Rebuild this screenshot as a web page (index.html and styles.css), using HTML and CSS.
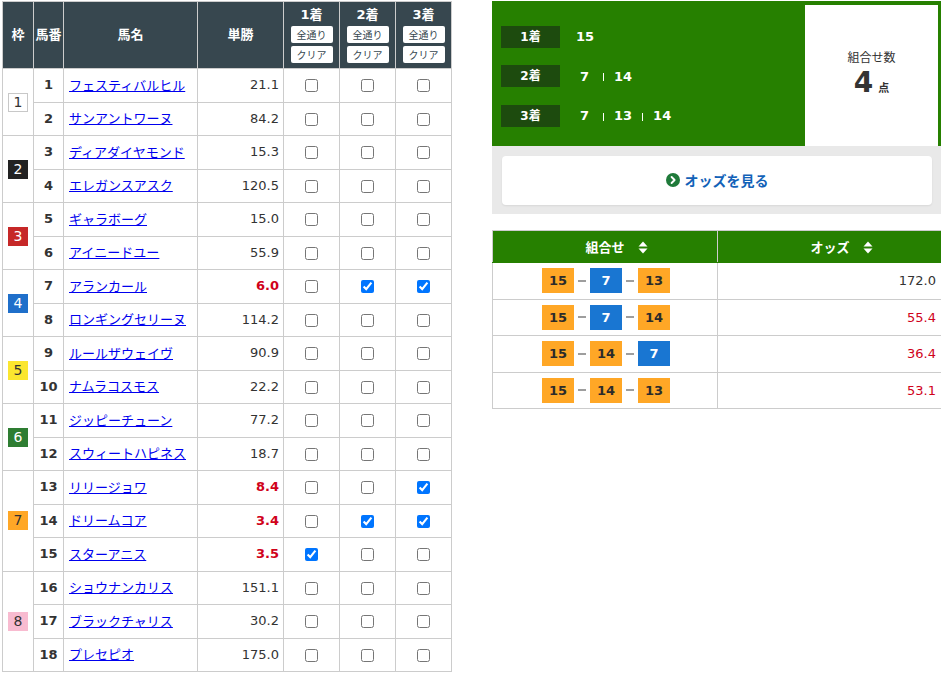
FILE: index.html
```html
<!DOCTYPE html>
<html lang="ja">
<head>
<meta charset="utf-8">
<title>3連単 フォーメーション</title>
<link rel="stylesheet" href="styles.css">
</head>
<body>
<div class="page">
  <table class="horses">
    <colgroup>
      <col class="c-waku"><col class="c-ban"><col class="c-name"><col class="c-odds"><col class="c-chk"><col class="c-chk"><col class="c-chk">
    </colgroup>
    <thead>
      <tr>
        <th>枠</th>
        <th>馬番</th>
        <th>馬名</th>
        <th>単勝</th>
        <th class="pos"><div class="pos-title">1着</div><button class="mini">全通り</button><button class="mini">クリア</button></th>
        <th class="pos"><div class="pos-title">2着</div><button class="mini">全通り</button><button class="mini">クリア</button></th>
        <th class="pos"><div class="pos-title">3着</div><button class="mini">全通り</button><button class="mini">クリア</button></th>
      </tr>
    </thead>
    <tbody>
      <tr><td class="waku" rowspan="2"><span class="wk wk1">1</span></td><td class="ban">1</td><td class="name"><a href="#">フェスティバルヒル</a></td><td class="odds">21.1</td><td class="chk"><input type="checkbox"></td><td class="chk"><input type="checkbox"></td><td class="chk"><input type="checkbox"></td></tr>
      <tr><td class="ban">2</td><td class="name"><a href="#">サンアントワーヌ</a></td><td class="odds">84.2</td><td class="chk"><input type="checkbox"></td><td class="chk"><input type="checkbox"></td><td class="chk"><input type="checkbox"></td></tr>
      <tr><td class="waku" rowspan="2"><span class="wk wk2">2</span></td><td class="ban">3</td><td class="name"><a href="#">ディアダイヤモンド</a></td><td class="odds">15.3</td><td class="chk"><input type="checkbox"></td><td class="chk"><input type="checkbox"></td><td class="chk"><input type="checkbox"></td></tr>
      <tr><td class="ban">4</td><td class="name"><a href="#">エレガンスアスク</a></td><td class="odds">120.5</td><td class="chk"><input type="checkbox"></td><td class="chk"><input type="checkbox"></td><td class="chk"><input type="checkbox"></td></tr>
      <tr><td class="waku" rowspan="2"><span class="wk wk3">3</span></td><td class="ban">5</td><td class="name"><a href="#">ギャラボーグ</a></td><td class="odds">15.0</td><td class="chk"><input type="checkbox"></td><td class="chk"><input type="checkbox"></td><td class="chk"><input type="checkbox"></td></tr>
      <tr><td class="ban">6</td><td class="name"><a href="#">アイニードユー</a></td><td class="odds">55.9</td><td class="chk"><input type="checkbox"></td><td class="chk"><input type="checkbox"></td><td class="chk"><input type="checkbox"></td></tr>
      <tr><td class="waku" rowspan="2"><span class="wk wk4">4</span></td><td class="ban">7</td><td class="name"><a href="#">アランカール</a></td><td class="odds hot">6.0</td><td class="chk"><input type="checkbox"></td><td class="chk"><input type="checkbox" checked></td><td class="chk"><input type="checkbox" checked></td></tr>
      <tr><td class="ban">8</td><td class="name"><a href="#">ロンギングセリーヌ</a></td><td class="odds">114.2</td><td class="chk"><input type="checkbox"></td><td class="chk"><input type="checkbox"></td><td class="chk"><input type="checkbox"></td></tr>
      <tr><td class="waku" rowspan="2"><span class="wk wk5">5</span></td><td class="ban">9</td><td class="name"><a href="#">ルールザウェイヴ</a></td><td class="odds">90.9</td><td class="chk"><input type="checkbox"></td><td class="chk"><input type="checkbox"></td><td class="chk"><input type="checkbox"></td></tr>
      <tr><td class="ban">10</td><td class="name"><a href="#">ナムラコスモス</a></td><td class="odds">22.2</td><td class="chk"><input type="checkbox"></td><td class="chk"><input type="checkbox"></td><td class="chk"><input type="checkbox"></td></tr>
      <tr><td class="waku" rowspan="2"><span class="wk wk6">6</span></td><td class="ban">11</td><td class="name"><a href="#">ジッピーチューン</a></td><td class="odds">77.2</td><td class="chk"><input type="checkbox"></td><td class="chk"><input type="checkbox"></td><td class="chk"><input type="checkbox"></td></tr>
      <tr><td class="ban">12</td><td class="name"><a href="#">スウィートハピネス</a></td><td class="odds">18.7</td><td class="chk"><input type="checkbox"></td><td class="chk"><input type="checkbox"></td><td class="chk"><input type="checkbox"></td></tr>
      <tr><td class="waku" rowspan="3"><span class="wk wk7">7</span></td><td class="ban">13</td><td class="name"><a href="#">リリージョワ</a></td><td class="odds hot">8.4</td><td class="chk"><input type="checkbox"></td><td class="chk"><input type="checkbox"></td><td class="chk"><input type="checkbox" checked></td></tr>
      <tr><td class="ban">14</td><td class="name"><a href="#">ドリームコア</a></td><td class="odds hot">3.4</td><td class="chk"><input type="checkbox"></td><td class="chk"><input type="checkbox" checked></td><td class="chk"><input type="checkbox" checked></td></tr>
      <tr><td class="ban">15</td><td class="name"><a href="#">スターアニス</a></td><td class="odds hot">3.5</td><td class="chk"><input type="checkbox" checked></td><td class="chk"><input type="checkbox"></td><td class="chk"><input type="checkbox"></td></tr>
      <tr><td class="waku" rowspan="3"><span class="wk wk8">8</span></td><td class="ban">16</td><td class="name"><a href="#">ショウナンカリス</a></td><td class="odds">151.1</td><td class="chk"><input type="checkbox"></td><td class="chk"><input type="checkbox"></td><td class="chk"><input type="checkbox"></td></tr>
      <tr><td class="ban">17</td><td class="name"><a href="#">ブラックチャリス</a></td><td class="odds">30.2</td><td class="chk"><input type="checkbox"></td><td class="chk"><input type="checkbox"></td><td class="chk"><input type="checkbox"></td></tr>
      <tr><td class="ban">18</td><td class="name"><a href="#">プレセピオ</a></td><td class="odds">175.0</td><td class="chk"><input type="checkbox"></td><td class="chk"><input type="checkbox"></td><td class="chk"><input type="checkbox"></td></tr>
    </tbody>
  </table>

  <div class="side">
    <div class="summary">
      <div class="picks">
        <div class="pick"><span class="pick-label">1着</span><span class="num">15</span></div>
        <div class="pick"><span class="pick-label">2着</span><span class="num">7</span><span class="sep"></span><span class="num">14</span></div>
        <div class="pick"><span class="pick-label">3着</span><span class="num">7</span><span class="sep"></span><span class="num">13</span><span class="sep"></span><span class="num">14</span></div>
      </div>
      <div class="count">
        <div class="count-label">組合せ数</div>
        <div class="count-value"><span class="big">4</span><span class="unit">点</span></div>
      </div>
    </div>
    <div class="btn-area">
      <a class="odds-btn" href="#">
        <svg class="go" width="14" height="14" viewBox="0 0 14 14"><circle cx="7" cy="7" r="7" fill="#1f7a3a"/><path d="M5.6 4 L8.6 7 L5.6 10" fill="none" stroke="#fff" stroke-width="1.9" stroke-linecap="round" stroke-linejoin="round"/></svg>
        <span>オッズを見る</span>
      </a>
    </div>
    <table class="combos">
      <thead>
        <tr>
          <th><span class="th-in">組合せ<svg class="sort" width="10" height="13" viewBox="0 0 10 13"><path d="M5 0.5 L9.5 5.5 H0.5 Z" fill="#fff"/><path d="M5 12.5 L9.5 7.5 H0.5 Z" fill="#fff"/></svg></span></th>
          <th><span class="th-in">オッズ<svg class="sort" width="10" height="13" viewBox="0 0 10 13"><path d="M5 0.5 L9.5 5.5 H0.5 Z" fill="#fff"/><path d="M5 12.5 L9.5 7.5 H0.5 Z" fill="#fff"/></svg></span></th>
        </tr>
      </thead>
      <tbody>
        <tr><td class="combo"><span class="bd or">15</span><span class="dash"></span><span class="bd bl">7</span><span class="dash"></span><span class="bd or">13</span></td><td class="cod">172.0</td></tr>
        <tr><td class="combo"><span class="bd or">15</span><span class="dash"></span><span class="bd bl">7</span><span class="dash"></span><span class="bd or">14</span></td><td class="cod red">55.4</td></tr>
        <tr><td class="combo"><span class="bd or">15</span><span class="dash"></span><span class="bd or">14</span><span class="dash"></span><span class="bd bl">7</span></td><td class="cod red">36.4</td></tr>
        <tr><td class="combo"><span class="bd or">15</span><span class="dash"></span><span class="bd or">14</span><span class="dash"></span><span class="bd or">13</span></td><td class="cod red">53.1</td></tr>
      </tbody>
    </table>
  </div>
</div>
</body>
</html>
```

FILE: styles.css
```css
* { box-sizing: border-box; }
html, body { margin: 0; padding: 0; background: #fff; }
body {
  font-family: "DejaVu Sans", "Noto Sans CJK JP", sans-serif;
  font-size: 13px;
  color: #333;
  overflow: hidden;
}
.page {
  display: flex;
  align-items: flex-start;
  gap: 40px;
  padding: 1px 0 0 2px;
  width: 941px;
}

/* ---------- horse table ---------- */
.horses {
  border-collapse: collapse;
  table-layout: fixed;
  width: 450px;
  flex: none;
}
.c-waku { width: 31px; }
.c-ban { width: 30px; }
.c-name { width: 134px; }
.c-odds { width: 86px; }
.c-chk { width: 56px; }

.horses th, .horses td {
  border: 1px solid #cccccc;
  padding: 0;
}
.horses th {
  background: #37474f;
  color: #fff;
  font-weight: bold;
  font-size: 13px;
  height: 67px;
  line-height: 16px;
  vertical-align: middle;
  text-align: center;
}
.horses th.pos {
  vertical-align: top;
  padding-top: 5px;
}
.pos-title { height: 19px; line-height: 16px; }
.mini {
  display: block;
  width: 42px;
  height: 17px;
  margin: 0 auto 3px;
  padding: 0;
  border: 0;
  border-radius: 2px;
  background: #fff;
  color: #37474f;
  font-family: "Noto Sans CJK JP", sans-serif;
  font-size: 10px;
  line-height: 17px;
}
.horses td { height: 33.5px; line-height: 16px; vertical-align: middle; }
.waku { text-align: center; }
.wk {
  display: inline-block;
  width: 20px;
  height: 19px;
  line-height: 19px;
  font-size: 14px;
  text-align: center;
  vertical-align: middle;
}
.wk1 { background: #fff; border: 1px solid #c8c8c8; line-height: 17px; color: #333; }
.wk2 { background: #222; color: #fff; }
.wk3 { background: #c62828; color: #fff; }
.wk4 { background: #1f6fca; color: #fff; }
.wk5 { background: #fbe62f; color: #333; }
.wk6 { background: #2e7d32; color: #fff; }
.wk7 { background: #ffa726; color: #333; }
.wk8 { background: #f8bbd0; color: #333; }

.ban { text-align: center; font-weight: bold; color: #333; }
.name { padding-left: 5px !important; white-space: nowrap; overflow: hidden; }
.name a { color: #0000ee; text-decoration: underline; font-family: "Noto Sans CJK JP", sans-serif; font-size: 13px; }
.odds { text-align: right; padding-right: 4px !important; color: #333; }
.odds.hot { color: #d0021b; font-weight: bold; }
.chk { text-align: center; }
.chk input { margin: 0; width: 13px; height: 13px; vertical-align: middle; }

/* ---------- side ---------- */
.side {
  width: 449px;
  flex: none;
  display: flex;
  flex-direction: column;
}
.summary {
  display: flex;
  background: #268000;
  height: 145px;
  padding: 4px 3px 0 0;
}
.picks {
  flex: 1;
  display: flex;
  flex-direction: column;
  justify-content: center;
  gap: 17.5px;
  padding: 1px 0 0 9px;
}
.pick {
  display: flex;
  align-items: center;
  height: 22px;
  color: #fff;
  font-weight: bold;
}
.pick-label {
  width: 59px;
  height: 22px;
  line-height: 22px;
  background: #1d4b0e;
  text-align: center;
  font-size: 12px;
  margin-right: 16px;
  font-family: "DejaVu Sans", "Noto Sans CJK JP", sans-serif;
}
.num { min-width: 17px; text-align: center; font-size: 13px; }
.sep { width: 1px; height: 8px; background: #fff; margin: 2px 10px 0 10px; }
.count {
  width: 133px;
  background: #fff;
  display: flex;
  flex-direction: column;
  align-items: center;
  justify-content: center;
  padding-bottom: 4px;
}
.count-label { font-family: "Noto Sans CJK JP", sans-serif; font-size: 12px; color: #333; line-height: 16px; }
.count-value { display: flex; align-items: baseline; margin-top: 2px; }
.big { font-size: 28px; font-weight: bold; color: #333; line-height: 32px; }
.unit { font-family: "Noto Sans CJK JP", sans-serif; font-size: 11px; font-weight: bold; margin-left: 5px; color: #333; }

.btn-area {
  background: #e9e9e9;
  padding: 10px 9px 9px 10px;
  height: 68px;
}
.odds-btn {
  display: flex;
  align-items: center;
  justify-content: center;
  gap: 5px;
  height: 49px;
  background: #fff;
  border-radius: 4px;
  box-shadow: 0 1px 2px rgba(0,0,0,0.08);
  text-decoration: none;
  color: #1262b8;
  font-family: "Noto Sans CJK JP", sans-serif;
  font-weight: bold;
  font-size: 14px;
  padding: 0 0 2px 0;
}
.go { flex: none; }

.combos {
  margin-top: 16px;
  border-collapse: collapse;
  table-layout: fixed;
  width: 451px;
}
.combos th, .combos td { border: 1px solid #cccccc; padding: 0; }
.combos th {
  background: #268000;
  color: #fff;
  height: 32px;
  font-family: "Noto Sans CJK JP", sans-serif;
  font-size: 13px;
  font-weight: bold;
  width: 50%;
  border-bottom-color: #268000;
}
.combos th:first-child { width: 224px; }
.th-in { position: relative; display: inline-block; }
.sort { position: absolute; left: calc(100% + 13px); top: 50%; margin-top: -6px; }
.combos td { height: 36.5px; vertical-align: middle; }
.combo { text-align: center; font-size: 0; padding-left: 2px !important; }
.bd {
  display: inline-block;
  width: 32px;
  height: 25px;
  line-height: 25px;
  font-size: 13px;
  font-weight: bold;
  text-align: center;
  vertical-align: middle;
}
.bd.or { background: #ffa726; color: #2b2b2b; }
.bd.bl { background: #1976d2; color: #fff; }
.dash { display: inline-block; width: 8px; height: 2px; background: #9e9e9e; margin: 0 4px; vertical-align: middle; }
.cod { text-align: right; padding-right: 6px !important; color: #333; font-size: 13px; }
.cod.red { color: #d0021b; }
```
